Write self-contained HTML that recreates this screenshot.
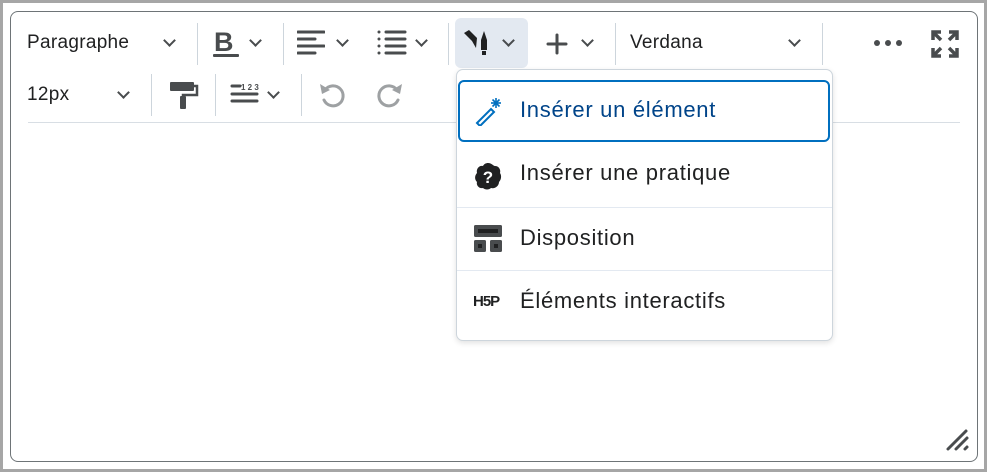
<!DOCTYPE html>
<html><head><meta charset="utf-8"><style>
*{box-sizing:border-box;margin:0;padding:0}
body{width:987px;height:472px;background:#a6a6a6;position:relative;font-family:"Liberation Sans",sans-serif;overflow:hidden}
.inner{position:absolute;left:3px;top:3px;width:981px;height:466px;background:#fff}
.box{position:absolute;left:10px;top:11px;width:968px;height:451px;border:1px solid #6e7477;border-radius:8px;background:#fff}
.t{position:absolute;color:#202122;font-size:19px;letter-spacing:.3px}
.sep{position:absolute;width:1px;background:#cdd5dc}
.chev{position:absolute;width:9px;height:9px;border-right:2px solid #494c4e;border-bottom:2px solid #494c4e;transform:rotate(45deg)}
svg{position:absolute}
.menu{position:absolute;left:456px;top:69px;width:377px;height:272px;border:1px solid #cdd5dc;border-radius:7px;background:#fff;box-shadow:0 2px 6px rgba(0,0,0,.12)}
.item{position:absolute;left:0;width:375px;height:64px}
.item .lbl{position:absolute;left:63px;top:17px;font-size:22px;letter-spacing:.7px;color:#202122}
.line{position:absolute;left:0;width:375px;height:1px;background:#e3e9f1}
</style></head><body>
<div class="inner"></div>
<div class="box"></div>
<!-- row 1 -->
<div class="t" style="left:27px;top:32px">Paragraphe</div>
<div class="chev" style="left:165px;top:36px"></div>
<div class="sep" style="left:197px;top:23px;height:42px"></div>
<div class="t" style="left:214px;top:27px;font-size:27px;font-weight:bold;color:#494c4e">B</div>
<div style="position:absolute;left:213px;top:54px;width:26px;height:3px;background:#494c4e;border-radius:1px"></div>
<div class="chev" style="left:251px;top:36px"></div>
<div class="sep" style="left:283px;top:23px;height:42px"></div>
<svg style="left:297px;top:30px" width="28" height="26"><g stroke="#494c4e" stroke-width="3" stroke-linecap="round"><line x1="1" y1="2" x2="27" y2="2"/><line x1="1" y1="9" x2="18" y2="9"/><line x1="1" y1="16" x2="27" y2="16"/><line x1="1" y1="23" x2="18" y2="23"/></g></svg>
<div class="chev" style="left:338px;top:36px"></div>
<svg style="left:377px;top:30px" width="30" height="26"><g stroke="#494c4e" stroke-width="3" stroke-linecap="round"><line x1="9" y1="2" x2="28" y2="2"/><line x1="9" y1="9" x2="28" y2="9"/><line x1="9" y1="16" x2="28" y2="16"/><line x1="9" y1="23" x2="28" y2="23"/></g><g fill="#494c4e"><circle cx="2" cy="2" r="1.5"/><circle cx="2" cy="9" r="1.5"/><circle cx="2" cy="16" r="1.5"/><circle cx="2" cy="23" r="1.5"/></g></svg>
<div class="chev" style="left:417px;top:36px"></div>
<div class="sep" style="left:448px;top:23px;height:42px"></div>
<div style="position:absolute;left:455px;top:18px;width:73px;height:50px;background:#e3e9f1;border-radius:6px"></div>
<svg style="left:463px;top:28px" width="30" height="28"><path d="M1 5 L6 2 L14 10 L13 20 L9 13 Z" fill="#202122"/><path d="M18 12 L21 3 L24 12 V22 H18 Z" fill="#202122"/><rect x="19" y="23" width="4" height="4" fill="#202122"/></svg>
<div class="chev" style="left:504px;top:36px"></div>
<svg style="left:546px;top:33px" width="22" height="22"><g stroke="#494c4e" stroke-width="3" stroke-linecap="round"><line x1="11" y1="2" x2="11" y2="20"/><line x1="2" y1="11" x2="20" y2="11"/></g></svg>
<div class="chev" style="left:583px;top:36px"></div>
<div class="sep" style="left:615px;top:23px;height:42px"></div>
<div class="t" style="left:630px;top:32px">Verdana</div>
<div class="chev" style="left:790px;top:36px"></div>
<div class="sep" style="left:822px;top:23px;height:42px"></div>
<svg style="left:873px;top:39px" width="32" height="8"><g fill="#494c4e"><circle cx="4" cy="4" r="3"/><circle cx="15" cy="4" r="3"/><circle cx="26" cy="4" r="3"/></g></svg>
<svg style="left:931px;top:30px" width="28" height="28"><g stroke="#494c4e" stroke-width="3.5" fill="none"><path d="M2 10V2h8M2 2l8 8"/><path d="M26 10V2h-8M26 2l-8 8"/><path d="M2 18v8h8M2 26l8-8"/><path d="M26 18v8h-8M26 26l-8-8"/></g></svg>
<!-- row 2 -->
<div class="t" style="left:27px;top:84px">12px</div>
<div class="chev" style="left:119px;top:88px"></div>
<div class="sep" style="left:151px;top:74px;height:42px"></div>
<svg style="left:169px;top:81px" width="30" height="28"><rect x="1" y="1" width="24" height="9" rx="1" fill="#494c4e"/><path d="M25 5h3v9H14v3" stroke="#494c4e" stroke-width="2.5" fill="none"/><rect x="11" y="15" width="6" height="13" rx="1" fill="#494c4e"/></svg>
<div class="sep" style="left:215px;top:74px;height:42px"></div>
<svg style="left:230px;top:82px" width="34" height="22"><g stroke="#494c4e" stroke-width="3" stroke-linecap="round"><line x1="2" y1="4" x2="10" y2="4"/><line x1="2" y1="12" x2="27" y2="12"/><line x1="2" y1="19" x2="27" y2="19"/></g><text x="11" y="8" font-size="8" font-weight="bold" fill="#494c4e" font-family="Liberation Sans">1 2 3</text></svg>
<div class="chev" style="left:269px;top:88px"></div>
<div class="sep" style="left:301px;top:74px;height:42px"></div>
<svg style="left:318px;top:80px" width="30" height="30"><path d="M7 10 A10 10 0 1 1 6 20" stroke="#9ea1a3" stroke-width="3" fill="none" stroke-linecap="round"/><path d="M2 4 L4 14 L12 10 Z" fill="#9ea1a3"/></svg>
<svg style="left:374px;top:80px" width="30" height="30"><path d="M23 10 A10 10 0 1 0 24 20" stroke="#9ea1a3" stroke-width="3" fill="none" stroke-linecap="round"/><path d="M28 4 L26 14 L18 10 Z" fill="#9ea1a3"/></svg>
<div style="position:absolute;left:28px;top:122px;width:932px;height:1px;background:#d8dee4"></div>
<!-- resize -->
<svg style="left:945px;top:428px" width="26" height="26"><g stroke="#494c4e" stroke-width="3" stroke-linecap="round"><line x1="3" y1="21" x2="21" y2="3"/><line x1="11" y1="21" x2="22" y2="10"/><line x1="20" y1="21" x2="22" y2="19"/></g></svg>
<!-- menu -->
<div class="menu">
 <div class="item" style="top:10px;left:1px;width:372px;height:62px;border:2px solid #006fbf;border-radius:6px">
  <svg style="left:14px;top:14px" width="30" height="30"><path d="M3 27 L17 13 L20 16 L6 30 Z" stroke="#006fbf" stroke-width="2" fill="none"/><g stroke="#006fbf" stroke-width="1.6"><line x1="22" y1="2" x2="22" y2="12"/><line x1="17" y1="7" x2="27" y2="7"/><line x1="18.5" y1="3.5" x2="25.5" y2="10.5"/><line x1="25.5" y1="3.5" x2="18.5" y2="10.5"/></g></svg>
  <div class="lbl" style="left:60px;top:15px;color:#004489">Insérer un élément</div>
 </div>
 <div class="item" style="top:73px">
  <svg style="left:17px;top:19px" width="28" height="28"><path d="M14 1 C18 1 19 4 21 4 C25 4 27 8 26 11 C28 14 27 18 25 20 C25 24 21 27 17 26 C15 28 11 28 9 26 C5 27 2 23 3 20 C0 17 1 13 3 11 C2 7 5 3 9 4 C10 2 12 1 14 1 Z" fill="#202122"/><text x="14" y="21" text-anchor="middle" font-size="17" font-weight="bold" fill="#fff" font-family="Liberation Sans">?</text></svg>
  <div class="lbl">Insérer une pratique</div>
 </div>
 <div class="line" style="top:137px"></div>
 <div class="item" style="top:138px">
  <svg style="left:17px;top:17px" width="28" height="28"><rect x="0" y="0" width="28" height="12" rx="1.5" fill="#494c4e"/><rect x="4" y="4" width="20" height="4" fill="#202122"/><rect x="0" y="15" width="12" height="12" rx="1.5" fill="#494c4e"/><rect x="16" y="15" width="12" height="12" rx="1.5" fill="#494c4e"/><rect x="4" y="19" width="4" height="4" fill="#202122"/><rect x="20" y="19" width="4" height="4" fill="#202122"/></svg>
  <div class="lbl">Disposition</div>
 </div>
 <div class="line" style="top:200px"></div>
 <div class="item" style="top:201px">
  <div style="position:absolute;left:16px;top:22px;font-size:15px;font-weight:bold;color:#202122;letter-spacing:-1px">H5P</div>
  <div class="lbl">Éléments interactifs</div>
 </div>
</div>
</body></html>
